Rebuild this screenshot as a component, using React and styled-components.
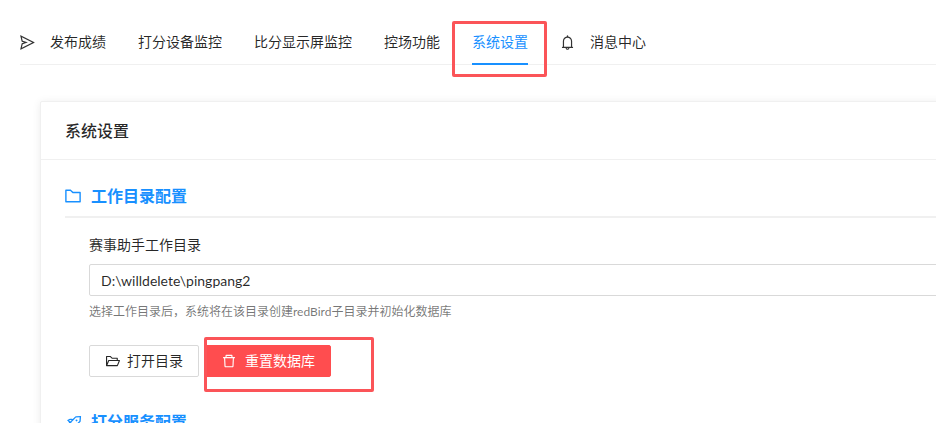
import React from 'react';
import styled, { createGlobalStyle } from 'styled-components';
import {
  AiOutlineBell,
  AiOutlineDelete,
  AiOutlineFolder,
  AiOutlineFolderOpen,
  AiOutlineRocket,
  AiOutlineSend,
} from 'react-icons/ai';

const GlobalStyle = createGlobalStyle`
  html, body {
    margin: 0;
    padding: 0;
    background: #fff;
    overflow: hidden;
  }
  body {
    font-family: Lato, 'Noto Sans CJK SC', sans-serif;
    font-size: 14px;
    color: rgba(0, 0, 0, 0.85);
  }
`;

const Page = styled.div`
  position: relative;
  width: 936px;
  height: 423px;
  overflow: hidden;
`;

const Menu = styled.nav`
  display: flex;
  align-items: stretch;
  height: 65px;
  box-sizing: border-box;
  margin-left: 20px;
  border-bottom: 1px solid #f0f0f0;
`;

const MenuIcon = styled.span`
  display: flex;
  align-items: center;
  justify-content: center;
  padding-top: 20px;
  font-size: 17px;
  width: 14px;
  margin-left: ${(p) => p.$offset || 0}px;
  color: #333;
  svg {
    flex-shrink: 0;
  }
`;

const MenuItem = styled.a`
  display: flex;
  align-items: center;
  padding: 20px 16px 0;
  position: relative;
  line-height: 22px;
  color: ${(p) => (p.$active ? '#1890ff' : 'rgba(0, 0, 0, 0.85)')};
  &::after {
    content: '';
    display: ${(p) => (p.$active ? 'block' : 'none')};
    position: absolute;
    left: 16px;
    right: 16px;
    bottom: -1px;
    height: 2px;
    background: #1890ff;
  }
`;

const Content = styled.main`
  padding: 36px 0 0 40px;
`;

const Card = styled.section`
  width: 1100px;
  background: #fff;
  border: 1px solid #f0f0f0;
  border-radius: 2px;
  box-shadow: 0 1px 8px rgba(0, 0, 0, 0.08);
`;

const CardHead = styled.header`
  height: 58px;
  display: flex;
  align-items: center;
  padding: 0 24px 2px;
  box-sizing: border-box;
  border-bottom: 1px solid #f0f0f0;
  font-size: 16px;
  font-weight: 500;
`;

const CardBody = styled.div`
  padding: 24px 24px 0;
`;

const SectionTitle = styled.h3`
  display: flex;
  align-items: flex-start;
  gap: 8px;
  margin: 0;
  height: 34px;
  box-sizing: border-box;
  padding-bottom: 8px;
  border-bottom: ${(p) => (p.$plain ? 'none' : '2px solid #f0f0f0')};
  font-size: 16px;
  font-weight: 700;
  line-height: 24px;
  color: #1890ff;
  svg {
    font-size: 20px;
    margin: 2px 0 0 -2px;
    transform: ${(p) => (p.$tilted ? 'translateX(2px) rotate(45deg)' : 'none')};
  }
`;

const Field = styled.div`
  padding: 16px 0 0 24px;
`;

const Label = styled.label`
  display: block;
  line-height: 22px;
  margin-bottom: 8px;
`;

const PathInput = styled.input`
  display: block;
  width: 100%;
  height: 32px;
  box-sizing: border-box;
  padding: 0 11px;
  border: 1px solid #d9d9d9;
  border-radius: 2px;
  font: inherit;
  color: rgba(0, 0, 0, 0.85);
  outline: none;
`;

const Hint = styled.p`
  margin: 6px 0 0;
  font-size: 12px;
  line-height: 20px;
  color: rgba(0, 0, 0, 0.55);
`;

const Actions = styled.div`
  display: flex;
  gap: 6px;
  margin-top: 23px;
  margin-bottom: 33px;
`;

const Button = styled.button`
  display: inline-flex;
  align-items: center;
  justify-content: center;
  gap: ${(p) => (p.$danger ? 8 : 6)}px;
  height: 32px;
  padding: 0 15px 2px;
  box-sizing: border-box;
  border: 1px solid ${(p) => (p.$danger ? '#ff4d4f' : '#d9d9d9')};
  border-radius: 2px;
  background: ${(p) => (p.$danger ? '#ff4d4f' : '#fff')};
  color: ${(p) => (p.$danger ? '#fff' : 'rgba(0, 0, 0, 0.85)')};
  font: inherit;
  svg {
    font-size: 16px;
    margin-top: 2px;
  }
`;

const Annotation = styled.div`
  position: absolute;
  left: ${(p) => p.$left}px;
  top: ${(p) => p.$top}px;
  width: ${(p) => p.$width}px;
  height: ${(p) => p.$height}px;
  box-sizing: border-box;
  border: 3px solid #fb5458;
  border-radius: 2px;
  pointer-events: none;
`;

const items = ['发布成绩', '打分设备监控', '比分显示屏监控', '控场功能'];

export default function App() {
  return (
    <Page>
      <GlobalStyle />
      <Menu>
        <MenuIcon>
          <AiOutlineSend />
        </MenuIcon>
        {items.map((item) => (
          <MenuItem key={item}>{item}</MenuItem>
        ))}
        <MenuItem $active>系统设置</MenuItem>
        <MenuIcon $offset={16}>
          <AiOutlineBell />
        </MenuIcon>
        <MenuItem>消息中心</MenuItem>
      </Menu>
      <Content>
        <Card>
          <CardHead>系统设置</CardHead>
          <CardBody>
            <SectionTitle>
              <AiOutlineFolder />
              工作目录配置
            </SectionTitle>
            <Field>
              <Label>赛事助手工作目录</Label>
              <PathInput readOnly value="D:\willdelete\pingpang2" />
              <Hint>选择工作目录后，系统将在该目录创建redBird子目录并初始化数据库</Hint>
              <Actions>
                <Button>
                  <AiOutlineFolderOpen />
                  打开目录
                </Button>
                <Button $danger>
                  <AiOutlineDelete />
                  重置数据库
                </Button>
              </Actions>
            </Field>
            <SectionTitle $plain $tilted>
              <AiOutlineRocket />
              打分服务配置
            </SectionTitle>
          </CardBody>
        </Card>
      </Content>
      <Annotation $left={452} $top={21} $width={95} $height={56} />
      <Annotation $left={204} $top={337} $width={170} $height={55} />
    </Page>
  );
}
